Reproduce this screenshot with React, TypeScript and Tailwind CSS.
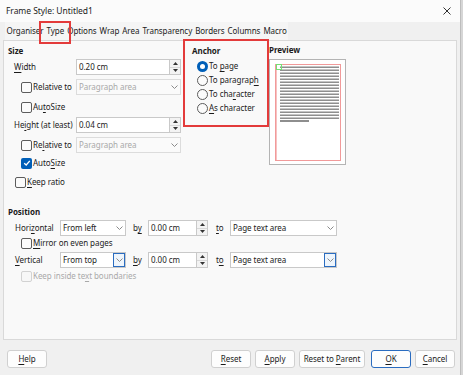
import React from 'react'

const red = 'border-[#e33b3b]'

function Mn({ t, i }: { t: string; i: number }) {
  return (
    <>
      {t.slice(0, i)}
      <span className="underline underline-offset-[1.5px]">{t[i]}</span>
      {t.slice(i + 1)}
    </>
  )
}

function Check({ on, off }: { on?: boolean; off?: boolean }) {
  if (on)
    return (
      <span className="flex h-[11px] w-[11px] shrink-0 items-center justify-center rounded-[2px] bg-[#005fb8]">
        <svg width="8" height="8" viewBox="0 0 8 8">
          <path d="M1.2 4.2 L3.2 6 L6.8 1.8" stroke="white" strokeWidth="1.3" fill="none" />
        </svg>
      </span>
    )
  return (
    <span
      className={`h-[11px] w-[11px] shrink-0 rounded-[2px] border ${
        off ? 'border-[#d2d2d2] bg-[#f7f7f7]' : 'border-[#5c5c5c] bg-[#fbfbfb]'
      }`}
    />
  )
}

function Radio({ on }: { on?: boolean }) {
  if (on)
    return (
      <span className="flex h-[11px] w-[11px] items-center justify-center rounded-full bg-[#005fb8]">
        <span className="h-[5px] w-[5px] rounded-full bg-white" />
      </span>
    )
  return <span className="h-[11px] w-[11px] rounded-full border border-[#5c5c5c] bg-[#fbfbfb]" />
}

function Chev() {
  return (
    <svg width="7" height="4" viewBox="0 0 7 4">
      <path d="M0.5 0.5 L3.5 3.5 L6.5 0.5" stroke="#8a8a8a" strokeWidth="1" fill="none" />
    </svg>
  )
}

function Spin() {
  return (
    <span className="flex h-full w-[11px] flex-col border border-l-0 border-[#c9c9c9] bg-[#f3f3f3]">
      <span className="flex flex-1 items-center justify-center border-b border-[#d8d8d8]">
        <svg width="5" height="3" viewBox="0 0 5 3">
          <path d="M0 3 L2.5 0 L5 3Z" fill="#333" />
        </svg>
      </span>
      <span className="flex flex-1 items-center justify-center">
        <svg width="5" height="3" viewBox="0 0 5 3">
          <path d="M0 0 L2.5 3 L5 0Z" fill="#333" />
        </svg>
      </span>
    </span>
  )
}

function Field({ value, w }: { value: string; w: string }) {
  return (
    <div className="flex h-[16px]">
      <div className={`flex items-center border border-[#c9c9c9] bg-white pl-[2px] ${w}`}>{value}</div>
      <Spin />
    </div>
  )
}

function Select({ text, w, disabled, focus }: { text: string; w: string; disabled?: boolean; focus?: boolean }) {
  return (
    <div
      className={`flex h-[16px] items-center border ${
        disabled ? 'border-[#dcdcdc] bg-[#fafafa] text-[#a9a9a9]' : 'border-[#c9c9c9] bg-white'
      } ${w}`}
    >
      <span className="flex-1 pl-[2px]">{text}</span>
      <span
        className={`flex h-full w-[12px] items-center justify-center ${
          focus ? 'border border-[#2a6cc0] bg-[#eef5fc]' : ''
        }`}
      >
        <Chev />
      </span>
    </div>
  )
}

function Preview() {
  const lines = Array.from({ length: 18 }, (_, k) => 7 + k * 3)
  return (
    <svg width="77" height="106" viewBox="0 0 77 106">
      <rect x="0.5" y="0.5" width="76" height="105" fill="white" stroke="#b4b4b4" />
      <rect x="6.5" y="5.5" width="65" height="96" fill="none" stroke="#f19a9a" />
      <rect x="7" y="6" width="1" height="95" fill="#f7c2c2" />
      {lines.map((y) => (
        <g key={y}>
          <rect x="11" y={y} width="59" height="2" fill="#c4c4c4" />
          <rect x="11" y={y + 1} width="59" height="1" fill="#8e8e8e" />
        </g>
      ))}
      <rect x="11" y="61" width="29" height="2" fill="#8e8e8e" />
      <rect x="7.5" y="5.5" width="5" height="5" fill="none" stroke="#74e074" />
    </svg>
  )
}

const tabs = ['Organiser', 'Type', 'Options', 'Wrap', 'Area', 'Transparency', 'Borders', 'Columns', 'Macro']

export default function App() {
  return (
    <div className="h-[375px] w-[463px] overflow-hidden bg-[#d6d6d6] font-['Noto_Sans',sans-serif] text-[8px] leading-[14px] tracking-[-0.05px] text-[#1b1b1b]">
      <div className="relative flex h-full w-[461px] flex-col border-r border-[#bdbdbd] bg-[#f0f0f0]">
        <div className="flex h-[22px] items-center justify-between bg-[#fbfbfb] pl-[6px] pr-[9px]">
          <span className="text-[8.5px]">Frame Style: Untitled1</span>
          <svg width="8" height="8" viewBox="0 0 8 8">
            <path d="M0.5 0.5 L7.5 7.5 M7.5 0.5 L0.5 7.5" stroke="#333" strokeWidth="1" />
          </svg>
        </div>

        <div className="flex h-[18px] items-stretch pl-[5px]">
          {tabs.map((t) => (
            <span key={t} className="flex items-center bg-[#f5f5f5] px-[1.5px]">
              {t}
            </span>
          ))}
        </div>

        <div className="mx-[3px] flex h-[300px] flex-col border border-[#d9d9d9] bg-[#f9f9f9]">
          <div className="flex h-[164px]">
            <div className="flex w-[179px] flex-col pt-[3px]">
              <div className="ml-[4px] h-[14px] font-bold">Size</div>
              <div className="mt-[1px] flex h-[16px] items-center">
                <span className="ml-[10px] w-[62px]">
                  <Mn t="Width" i={0} />
                </span>
                <Field value="0.20 cm" w="w-[94px]" />
              </div>
              <div className="mt-[4px] flex h-[16px] items-center">
                <span className="ml-[17px] flex w-[55px] items-center gap-[1px]">
                  <Check />
                  <span>Relative to</span>
                </span>
                <Select text="Paragraph area" w="w-[105px]" disabled />
              </div>
              <div className="mt-[4px] flex h-[16px] items-center gap-[1px] pl-[17px]">
                <Check />
                <span>
                  <Mn t="AutoSize" i={2} />
                </span>
              </div>
              <div className="mt-[2px] flex h-[16px] items-center">
                <span className="ml-[10px] w-[62px] whitespace-nowrap">
                  <Mn t="Height (at least)" i={2} />
                </span>
                <Field value="0.04 cm" w="w-[94px]" />
              </div>
              <div className="mt-[4px] flex h-[16px] items-center">
                <span className="ml-[17px] flex w-[55px] items-center gap-[1px]">
                  <Check />
                  <span>
                    <Mn t="Relative to" i={2} />
                  </span>
                </span>
                <Select text="Paragraph area" w="w-[105px]" disabled />
              </div>
              <div className="mt-[2px] flex h-[16px] items-center gap-[1px] pl-[17px]">
                <Check on />
                <span>
                  <Mn t="AutoSize" i={4} />
                </span>
              </div>
              <div className="mt-[3px] flex h-[16px] items-center gap-[1px] pl-[11px]">
                <Check />
                <span>
                  <Mn t="Keep ratio" i={0} />
                </span>
              </div>
            </div>

            <div className={`-mt-[2px] flex h-[88px] w-[86px] flex-col border-2 ${red} pl-[7px] pt-[3px]`}>
              <div className="h-[14px] font-bold">Anchor</div>
              <div className="mt-[1px] flex flex-col pl-[5px]">
                <div className="flex h-[14px] items-center gap-[1px]">
                  <Radio on />
                  <span>
                    To <Mn t="page" i={0} />
                  </span>
                </div>
                <div className="flex h-[14px] items-center gap-[1px]">
                  <Radio />
                  <span>
                    To <Mn t="paragraph" i={8} />
                  </span>
                </div>
                <div className="flex h-[14px] items-center gap-[1px]">
                  <Radio />
                  <span>
                    To <Mn t="character" i={3} />
                  </span>
                </div>
                <div className="flex h-[14px] items-center gap-[1px]">
                  <Radio />
                  <span>
                    <Mn t="As character" i={0} />
                  </span>
                </div>
              </div>
            </div>

            <div className="flex flex-col pt-[2px]">
              <div className="h-[16px] font-bold">Preview</div>
              <Preview />
            </div>
          </div>

          <div className="flex flex-col">
            <div className="ml-[4px] h-[14px] font-bold">Position</div>
            <div className="mt-[1px] flex h-[16px] items-center">
              <span className="ml-[11px] w-[45px]">
                <Mn t="Horizontal" i={4} />
              </span>
              <Select text="From left" w="w-[66px]" />
              <span className="ml-[7px] w-[15px]">
                <Mn t="by" i={1} />
              </span>
              <Field value="0.00 cm" w="w-[49px]" />
              <span className="ml-[8px] w-[14px]">
                <Mn t="to" i={0} />
              </span>
              <Select text="Page text area" w="w-[107px]" />
            </div>
            <div className="flex h-[14px] items-center gap-[1px] pl-[17px]">
              <Check />
              <span>
                <Mn t="Mirror on even pages" i={0} />
              </span>
            </div>
            <div className="mt-[2px] flex h-[16px] items-center">
              <span className="ml-[11px] w-[45px]">
                <Mn t="Vertical" i={0} />
              </span>
              <Select text="From top" w="w-[66px]" focus />
              <span className="ml-[7px] w-[15px]">
                <Mn t="by" i={0} />
              </span>
              <Field value="0.00 cm" w="w-[49px]" />
              <span className="ml-[8px] w-[14px]">
                <Mn t="to" i={1} />
              </span>
              <Select text="Page text area" w="w-[107px]" focus />
            </div>
            <div className="mt-[1px] flex h-[14px] items-center gap-[1px] pl-[17px] text-[#a9a9a9]">
              <Check off />
              <span>
                <Mn t="Keep inside text boundaries" i={14} />
              </span>
            </div>
          </div>
        </div>

        <div className="flex items-center pl-[7px] pt-[10px]">
          <button className="h-[18px] w-[40px] rounded-[3px] border border-[#d0d0d0] bg-[#fdfdfd]">
            <Mn t="Help" i={0} />
          </button>
          <div className="ml-auto mr-[5px] flex gap-[4px]">
            <button className="h-[18px] w-[40px] rounded-[3px] border border-[#d0d0d0] bg-[#fdfdfd]">
              <Mn t="Reset" i={0} />
            </button>
            <button className="h-[18px] w-[40px] rounded-[3px] border border-[#d0d0d0] bg-[#fdfdfd]">
              <Mn t="Apply" i={0} />
            </button>
            <button className="h-[18px] w-[66px] rounded-[3px] border border-[#d0d0d0] bg-[#fdfdfd]">
              Reset to <Mn t="Parent" i={0} />
            </button>
            <button className="ml-[2px] h-[18px] w-[40px] rounded-[3px] border border-[#2a6cc0] bg-[#fdfdfd]">
              <Mn t="OK" i={0} />
            </button>
            <button className="h-[18px] w-[40px] rounded-[3px] border border-[#d0d0d0] bg-[#fdfdfd]">
              <Mn t="Cancel" i={0} />
            </button>
          </div>
        </div>

        <div className={`absolute left-[39px] top-[21px] h-[23px] w-[32px] border-2 ${red}`} />
      </div>
    </div>
  )
}
